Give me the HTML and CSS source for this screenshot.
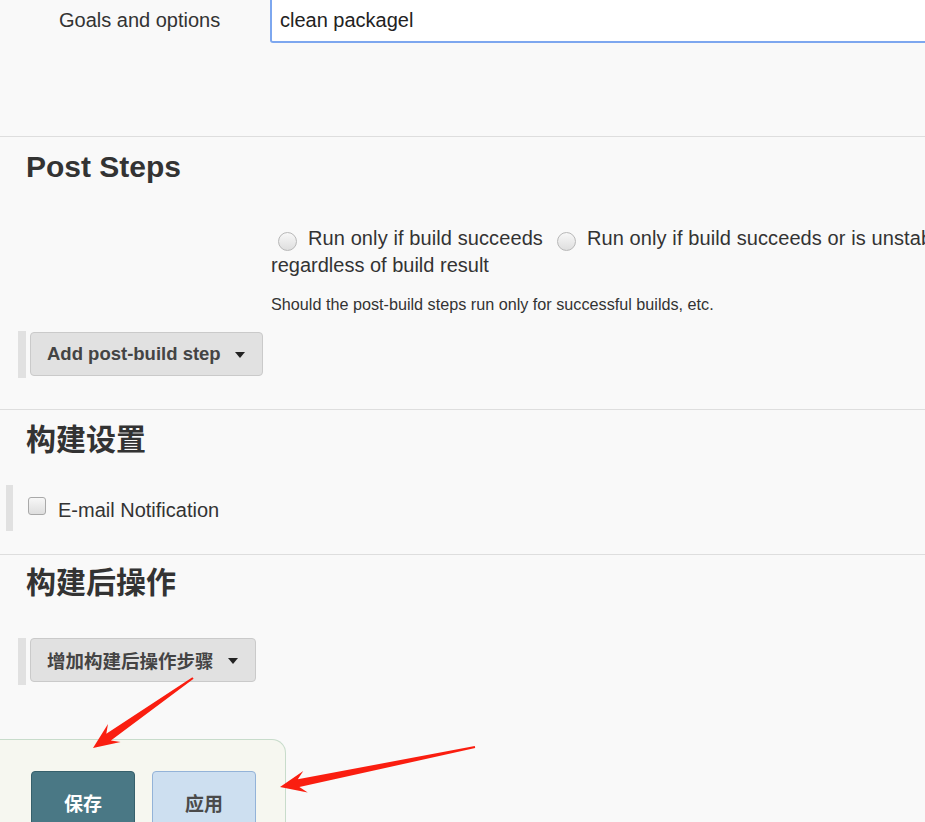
FILE: index.html
```html
<!DOCTYPE html>
<html lang="zh-CN">
<head>
<meta charset="utf-8">
<title>Jenkins 配置</title>
<link rel="stylesheet" href="styles.css">
</head>
<body>
<div class="page">
  <section class="section goals">
    <div class="field-row">
      <label class="field-label" for="goals">Goals and options</label>
      <input id="goals" class="text-input" type="text" value="clean packagel">
    </div>
  </section>

  <section class="section post-steps">
    <h2 class="section-title">Post Steps</h2>
    <div class="radio-block">
      <div class="radio-line">
        <span class="radio"></span><span class="radio-label">Run only if build succeeds</span>
        <span class="radio"></span><span class="radio-label">Run only if build succeeds or is unstable</span>
        <span class="radio"></span><span class="radio-label">Run</span>
      </div>
      <div class="radio-wrap">regardless of build result</div>
      <div class="help">Should the post-build steps run only for successful builds, etc.</div>
    </div>
    <div class="step-row">
      <span class="bar"></span>
      <button class="menu-btn" type="button">Add post-build step<span class="caret"></span></button>
    </div>
  </section>

  <section class="section build-settings">
    <h2 class="section-title">构建设置</h2>
    <div class="check-row">
      <span class="bar bar-narrow"></span>
      <span class="checkbox"></span>
      <span class="check-label">E-mail Notification</span>
    </div>
  </section>

  <section class="section-last">
    <h2 class="section-title">构建后操作</h2>
    <div class="step-row step-row-last">
      <span class="bar"></span>
      <button class="menu-btn" type="button">增加构建后操作步骤<span class="caret"></span></button>
    </div>
  </section>

  <div class="form-actions">
    <button class="btn btn-save" type="button">保存</button>
    <button class="btn btn-apply" type="button">应用</button>
  </div>

  <svg class="annotations" width="925" height="822" viewBox="0 0 925 822" aria-hidden="true">
    <polygon fill="#fa1e10" points="93,748 120.6,742.1 110.9,740.4 193.6,678.8 192.4,677.2 106.3,733.8 108,724.1"/>
    <polygon fill="#fa1e10" points="280,787 307.7,792.6 299.4,787.1 475.2,748 474.8,746 297.8,779.3 303.3,771"/>
  </svg>
</div>
</body>
</html>
```

FILE: styles.css
```css
* {
  box-sizing: border-box;
}

html,
body {
  margin: 0;
  padding: 0;
}

body {
  background: #f9f9f9;
  font-family: "Liberation Sans", Arial, "Noto Sans CJK SC", sans-serif;
  color: #333;
  overflow: hidden;
}

.page {
  position: relative;
  width: 925px;
  height: 822px;
  overflow: hidden;
}

.section {
  border-bottom: 1px solid #dedede;
}

/* Goals row */
.goals {
  height: 137px;
}

.field-row {
  display: flex;
  align-items: flex-start;
}

.field-label {
  flex-shrink: 0;
  width: 270px;
  padding-left: 59px;
  font-size: 20px;
  line-height: 40px;
  color: #333;
}

.text-input {
  flex-shrink: 0;
  display: block;
  width: 700px;
  height: 43px;
  margin: 0;
  padding: 0 8px;
  border: 2px solid #7da7ef;
  border-top: 0;
  border-radius: 0 0 0 3px;
  background: #fff;
  outline: none;
  font-family: "Liberation Sans", Arial, sans-serif;
  font-size: 20px;
  color: #222;
}

/* Section headings */
.section-title {
  margin: 0;
  padding-left: 26px;
  font-family: "Liberation Sans", Arial, "Noto Sans CJK SC", sans-serif;
  font-size: 30px;
  line-height: 36px;
  font-weight: bold;
  color: #333;
}

/* Post steps */
.post-steps {
  padding: 12px 0 31px;
}

.radio-block {
  margin-top: 41px;
  padding-left: 271px;
}

.radio-line {
  display: flex;
  align-items: center;
  height: 25px;
  white-space: nowrap;
  font-size: 20px;
  letter-spacing: 0.1px;
}

.radio {
  flex-shrink: 0;
  width: 19px;
  height: 19px;
  margin: 5px 11px 0 7px;
  border: 1px solid #b8b8b8;
  border-radius: 50%;
  background: linear-gradient(#f8f8f8, #dedede);
}

.radio-label + .radio {
  margin-left: 14px;
}

.radio-wrap {
  margin-top: 2px;
  font-size: 20px;
  line-height: 25px;
}

.help {
  margin-top: 16px;
  font-size: 16.2px;
  line-height: 20px;
  color: #333;
}

.step-row {
  display: flex;
  align-items: flex-start;
  height: 47px;
  margin-top: 17px;
  margin-left: 18px;
}

.bar {
  flex-shrink: 0;
  width: 8px;
  height: 47px;
  background: #e1e1e1;
}

.menu-btn {
  display: flex;
  align-items: center;
  gap: 14px;
  height: 44px;
  margin: 1px 0 0 4px;
  padding: 0 17px 0 16px;
  border: 1px solid #cacaca;
  border-radius: 4px;
  background: #e1e1e1;
  font-family: "Liberation Sans", Arial, "Noto Sans CJK SC", sans-serif;
  font-size: 18.5px;
  font-weight: bold;
  color: #444;
}

.caret {
  width: 0;
  height: 0;
  margin-top: 2px;
  border-top: 6px solid #222;
  border-left: 5px solid transparent;
  border-right: 5px solid transparent;
}

/* Build settings */
.build-settings {
  padding: 12px 0 23px;
}

.check-row {
  display: flex;
  align-items: flex-start;
  height: 46px;
  margin-top: 27px;
  margin-left: 6px;
}

.bar-narrow {
  width: 7px;
  height: 46px;
}

.checkbox {
  flex-shrink: 0;
  width: 18px;
  height: 18px;
  margin: 12px 12px 0 15px;
  border: 1px solid #a9a9a9;
  border-radius: 3px;
  background: linear-gradient(#f7f7f7, #dedede);
}

.check-label {
  margin-top: 12px;
  font-size: 20px;
  line-height: 26px;
  color: #333;
}

/* Post-build actions */
.section-last {
  padding-top: 10px;
}

.step-row-last {
  margin-top: 37px;
}

.step-row-last .menu-btn {
  margin-top: 0;
}

/* Bottom action panel */
.form-actions {
  display: flex;
  gap: 17px;
  width: 286px;
  height: 120px;
  margin-top: 54px;
  padding: 31px 0 0 31px;
  background: #f6f7f0;
  border: 1px solid #c8dccb;
  border-left: 0;
  border-bottom: 0;
  border-top-right-radius: 14px;
}

.btn {
  width: 104px;
  height: 62px;
  border-radius: 4px;
  font-family: "Noto Sans CJK SC", sans-serif;
  font-size: 19px;
  font-weight: bold;
}

.btn-save {
  background: #4a7885;
  border: 1px solid #36606c;
  color: #fff;
}

.btn-apply {
  background: #cddff0;
  border: 1px solid #93b3d8;
  color: #4a4a4a;
}

/* Screenshot annotations */
.annotations {
  position: absolute;
  top: 0;
  left: 0;
  pointer-events: none;
}
```
